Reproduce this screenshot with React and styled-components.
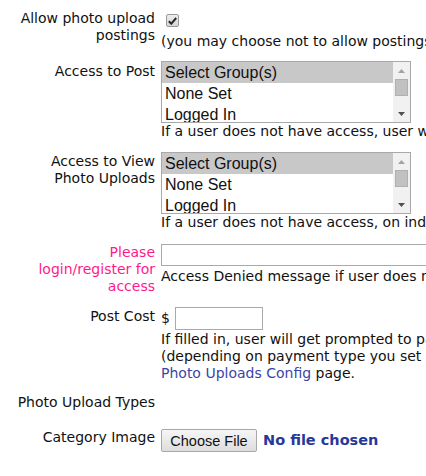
import React from 'react';
import styled, { createGlobalStyle } from 'styled-components';

const GlobalStyle = createGlobalStyle`
  html, body {
    margin: 0;
    padding: 0;
    overflow: hidden;
    background: #fff;
  }
  body {
    font-family: "DejaVu Sans", Verdana, sans-serif;
    font-size: 14px;
    line-height: 17px;
    color: #111;
  }
`;

const groups = ['Select Group(s)', 'None Set', 'Logged In'];

const GroupList = () => (
  <Listbox>
    <Options>
      {groups.map((g, i) => (
        <Option key={g} $selected={i === 0}>{g}</Option>
      ))}
    </Options>
    <Scrollbar>
      <ArrowButton>
        <svg width="7" height="4" viewBox="0 0 7 4">
          <path d="M0 4 L3.5 0 L7 4 Z" fill="#a3a3a3" />
        </svg>
      </ArrowButton>
      <Thumb />
      <Track />
      <ArrowButton>
        <svg width="7" height="4" viewBox="0 0 7 4">
          <path d="M0 0 L7 0 L3.5 4 Z" fill="#505050" />
        </svg>
      </ArrowButton>
    </Scrollbar>
  </Listbox>
);

const App = () => (
  <>
    <GlobalStyle />
    <Form>
      <Row $space={10}>
        <Label>Allow photo upload postings</Label>
        <Field>
          <Checkbox>
            <svg width="9" height="8" viewBox="0 0 9 8">
              <path d="M0.8 4.2 L3.3 6.7 L8.2 1" stroke="#2a2a2a" strokeWidth="2" fill="none" />
            </svg>
          </Checkbox>
          <Help>(you may choose not to allow postings in this category)</Help>
        </Field>
      </Row>

      <Row $space={11}>
        <Label $offset={2}>Access to Post</Label>
        <Field>
          <GroupList />
          <Help>If a user does not have access, user will not be able to post</Help>
        </Field>
      </Row>

      <Row $space={12}>
        <Label $offset={1}>Access to View Photo Uploads</Label>
        <Field>
          <GroupList />
          <Help>If a user does not have access, on index page they will see a message</Help>
        </Field>
      </Row>

      <Row $space={13}>
        <Label $alert>Please login/register for access</Label>
        <Field>
          <TextInput $width={300} $height={22} />
          <Help $gap={2}>Access Denied message if user does not have access</Help>
        </Field>
      </Row>

      <Row $space={12}>
        <Label $offset={1}>Post Cost</Label>
        <Field>
          <CostLine>
            <span>$</span>
            <TextInput $width={88} $height={23} />
          </CostLine>
          <Help $gap={1}>
            If filled in, user will get prompted to pay the post cost
            <br />
            (depending on payment type you set on the
            <br />
            <Link>Photo Uploads Config</Link> page.
          </Help>
        </Field>
      </Row>

      <Row $space={12}>
        <Label>Photo Upload Types</Label>
        <Field />
      </Row>

      <Row $space={18}>
        <Label>Category Image</Label>
        <Field>
          <FileLine>
            <FileButton type="button">Choose File</FileButton>
            <FileStatus>No file chosen</FileStatus>
          </FileLine>
        </Field>
      </Row>
    </Form>
  </>
);

export default App;

const Form = styled.div`
  display: flex;
  flex-direction: column;
  width: 760px;
  padding-left: 15px;
`;

const Row = styled.div`
  display: grid;
  grid-template-columns: 140px 1fr;
  column-gap: 6px;
  align-items: start;
  margin-top: ${(p) => p.$space}px;
`;

const Label = styled.div`
  text-align: right;
  padding-top: ${(p) => p.$offset || 0}px;
  color: ${(p) => (p.$alert ? '#ff1a8c' : '#111')};
`;

const Field = styled.div`
  display: flex;
  flex-direction: column;
  align-items: flex-start;
`;

const Help = styled.div`
  white-space: nowrap;
  margin-top: ${(p) => p.$gap || 0}px;
`;

const Checkbox = styled.span`
  display: flex;
  align-items: center;
  justify-content: center;
  box-sizing: border-box;
  width: 13px;
  height: 13px;
  margin: 4px 0 6px 5px;
  border: 1px solid #9a9a9a;
  border-radius: 2px;
  background: linear-gradient(#ededed, #d6d6d6);
`;

const Listbox = styled.div`
  display: flex;
  box-sizing: border-box;
  width: 250px;
  height: 62px;
  border: 1px solid #a9a9a9;
  background: #fff;
  overflow: hidden;
`;

const Options = styled.div`
  flex: 1;
  font-family: "Liberation Sans", Arial, sans-serif;
  font-size: 16px;
`;

const Option = styled.div`
  height: 21px;
  line-height: 21px;
  padding-left: 3px;
  white-space: nowrap;
  color: #111;
  background: ${(p) => (p.$selected ? '#c8c8c8' : 'transparent')};
`;

const Scrollbar = styled.div`
  display: flex;
  flex-direction: column;
  align-items: center;
  width: 17px;
  background: #f1f1f1;
`;

const ArrowButton = styled.div`
  display: flex;
  align-items: center;
  justify-content: center;
  width: 17px;
  height: 17px;
`;

const Thumb = styled.div`
  box-sizing: border-box;
  width: 13px;
  height: 17px;
  background: #c1c1c1;
  border: 1px solid #b0b0b0;
`;

const Track = styled.div`
  flex: 1;
`;

const TextInput = styled.div`
  box-sizing: border-box;
  width: ${(p) => p.$width}px;
  height: ${(p) => p.$height}px;
  border: 1px solid #a9a9a9;
  background: #fff;
`;

const CostLine = styled.div`
  display: flex;
  align-items: center;
  gap: 5px;
`;

const Link = styled.span`
  color: #3b45a5;
`;

const FileLine = styled.div`
  display: flex;
  align-items: center;
  gap: 6px;
`;

const FileButton = styled.button`
  box-sizing: border-box;
  width: 96px;
  height: 23px;
  padding: 0;
  border: 1px solid #a7a7a7;
  border-radius: 2px;
  background: linear-gradient(#f6f6f6, #dddddd);
  font-family: "Liberation Sans", Arial, sans-serif;
  font-size: 14.5px;
  color: #111;
`;

const FileStatus = styled.span`
  font-weight: bold;
  font-size: 14.5px;
  color: #27389a;
`;
